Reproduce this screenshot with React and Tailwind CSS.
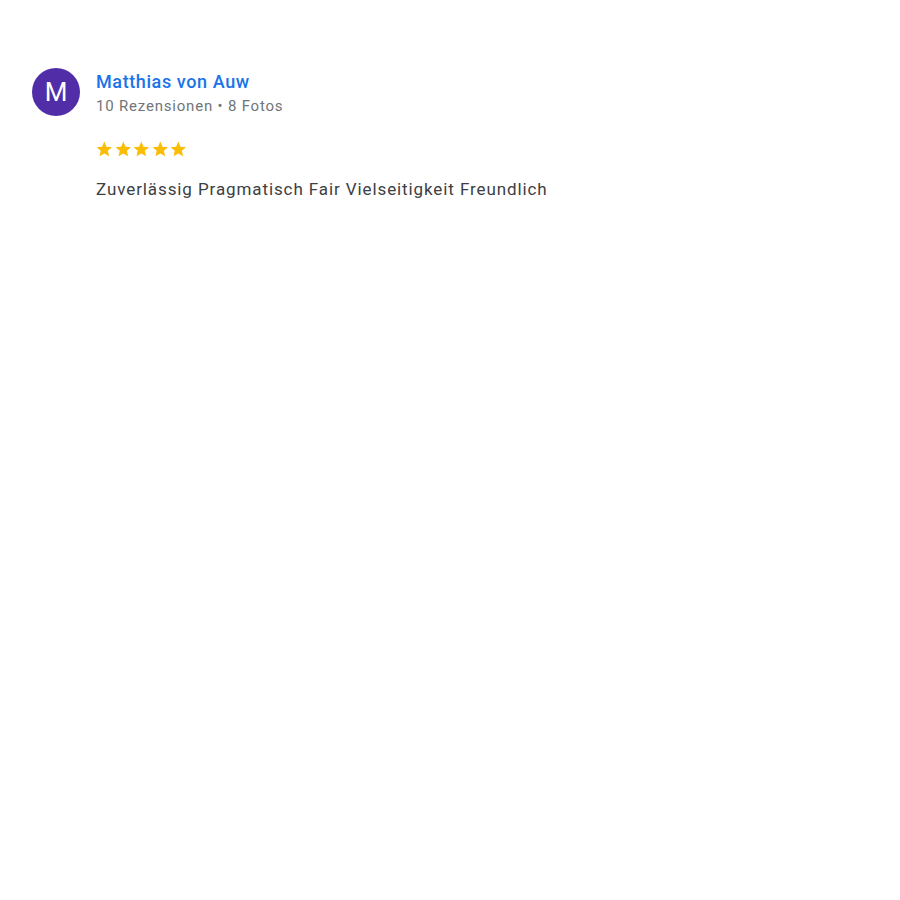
import React from 'react';

const Star = () => (
  <svg viewBox="0 0 24 24" className="w-[18.6px] h-[18.6px] fill-[#fbbc04]">
    <path d="M12 17.27L18.18 21l-1.64-7.03L22 9.24l-7.19-.61L12 2 9.19 8.63 2 9.24l5.46 4.73L5.82 21z" />
  </svg>
);

const App = () => {
  return (
    <div className="min-h-[900px] bg-white font-['Roboto',sans-serif] pt-[68px] pl-[32px]">
      <div className="flex gap-4">
        {/* Avatar */}
        <div className="w-12 h-12 rounded-full bg-[#512da8] flex items-center justify-center text-white text-[26px] leading-none shrink-0">
          M
        </div>
        <div className="flex flex-col">
          <div className="text-[18px] font-medium text-[#1a73e8] leading-[26px] tracking-[0.6px] mt-[1px]">Matthias von Auw</div>
          <div className="text-[15px] text-[#70757a] leading-[20px] tracking-[0.8px] mt-[1px]">10 Rezensionen • 8 Fotos</div>
          <div className="flex mt-[24px] -ml-[1px]">
            <Star />
            <Star />
            <Star />
            <Star />
            <Star />
          </div>
          <p className="text-[17px] text-[#3c4043] leading-[24px] tracking-[0.9px] mt-[18px]">
            Zuverlässig Pragmatisch Fair Vielseitigkeit Freundlich
          </p>
        </div>
      </div>
    </div>
  );
};

export default App;
